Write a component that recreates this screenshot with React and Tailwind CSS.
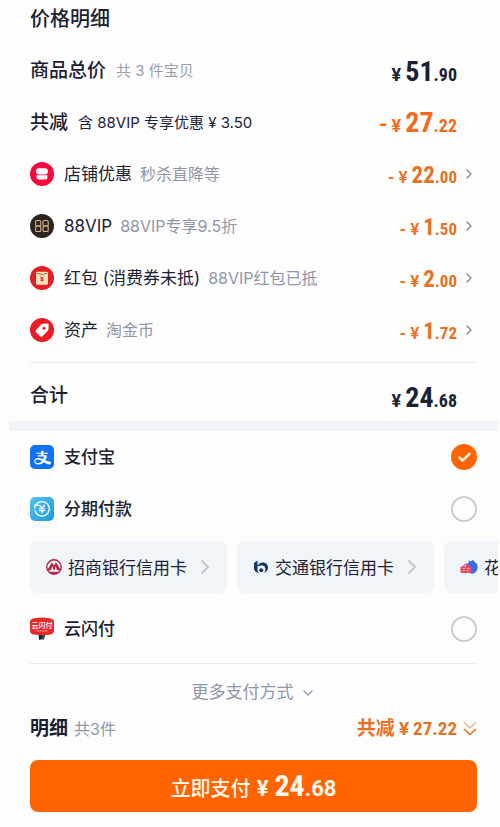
import { useState } from 'react';
import { Check, ChevronDown, ChevronRight } from 'lucide-react';
import { AiOutlineAlipay } from 'react-icons/ai';

const StoreIcon = () => (
  <svg viewBox="0 0 24 24" className="size-6">
    <circle cx="12" cy="12" r="12" fill="#f5093f" />
    <path d="M8.300 6.200h7.400c1.400 0 2.300 1.400 2.300 3.200 0 1.500-.8 2.600-2 2.600H8c-1.200 0-2-1.100-2-2.600 0-1.800.9-3.200 2.300-3.200z" fill="#fff" />
    <path d="M6.600 13.200h10.800v2.500c0 1-.7 1.700-1.700 1.700H8.300c-1 0-1.700-.7-1.700-1.700z" fill="#fff" />
    <path d="M8 12.600h8" stroke="#fbb3c3" strokeWidth="0.8" />
  </svg>
);

const VipIcon = () => (
  <svg viewBox="0 0 24 24" className="size-6">
    <circle cx="12" cy="12" r="12" fill="#2b2420" />
    <g fill="none" stroke="#d9b08a" strokeWidth="1.100" strokeLinejoin="round">
      <rect x="5.600" y="6.500" width="5.200" height="5.500" rx="1.300" />
      <rect x="5.600" y="12" width="5.200" height="5.500" rx="1.300" />
      <rect x="13" y="6.500" width="5.200" height="5.500" rx="1.300" />
      <rect x="13" y="12" width="5.200" height="5.500" rx="1.300" />
    </g>
  </svg>
);

const RedPacketIcon = () => (
  <svg viewBox="0 0 24 24" className="size-6">
    <circle cx="12" cy="12" r="12" fill="#e3201f" />
    <rect x="6" y="5.800" width="12" height="13" rx="1.200" fill="#fde3bd" />
    <path d="M7 7.300Q12 9.500 17 7.300" fill="none" stroke="#b5553c" strokeWidth="0.9" />
    <path d="M10.300 10.500l1.700 2 1.700-2M12 12.500v3.200M10.300 12.900h3.400M10.300 14.300h3.400" fill="none" stroke="#d8352a" strokeWidth="1" />
  </svg>
);

const TagIcon = () => (
  <svg viewBox="0 0 24 24" className="size-6">
    <circle cx="12" cy="12" r="12" fill="#ec1c24" />
    <path d="M12.600 5.800l4.800-.3c.9 0 1.300.4 1.300 1.300l-.3 4.700c0 .5-.2.900-.5 1.200l-5.500 5.500c-.7.7-1.700.7-2.400 0L6.100 14.300c-.7-.7-.7-1.700 0-2.400l5.300-5.600c.3-.3.700-.5 1.200-.5z" fill="#fff" />
    <circle cx="14" cy="10.200" r="1.500" fill="#ec1c24" />
  </svg>
);

const AlipayIcon = () => (
  <span className="flex size-6 items-center justify-center rounded-[5px] bg-[#1073f5] text-white">
    <AiOutlineAlipay size={19} />
  </span>
);

const InstallmentIcon = () => (
  <svg viewBox="0 0 24 24" className="size-6">
    <defs>
      <linearGradient id="installment" x1="0" y1="0" x2="1" y2="1">
        <stop offset="0" stopColor="#55c3ef" />
        <stop offset="1" stopColor="#1d9ade" />
      </linearGradient>
    </defs>
    <rect width="24" height="24" rx="5" fill="url(#installment)" />
    <g fill="none" stroke="#fff" strokeLinecap="round">
      <path d="M6.200 7.600A7.200 7.200 0 1 1 5 13.500" strokeWidth="1.300" />
      <path d="M4.700 11.200l.4-3.800 3.300 1.200" strokeWidth="1.300" strokeLinejoin="round" />
      <path d="M9.600 8.200l2.400 3 2.400-3M12 11.200v4.500M9.500 11.700h5M9.500 13.700h5" strokeWidth="1.300" />
    </g>
  </svg>
);

const UnionPayIcon = () => (
  <svg viewBox="0 0 24 24" className="size-6">
    <path d="M9.500 17h6l-1.500 5.500H9z" fill="#20495c" />
    <path d="M8.500 17h4.500l-2.500 5.500H9z" fill="#1b1f2c" />
    <path d="M4.500 1.200Q12-.4 19.500 1.200 24 1.700 24 5v8.500q0 3.300-3.500 4-8.500 1.400-17 0Q0 16.800 0 13.500V5q0-3.300 4.500-3.800z" fill="#e52a28" />
    <text x="12" y="10.800" textAnchor="middle" fontSize="7" fontWeight="500" fill="#fff">云闪付</text>
    <path d="M6.500 13.800h11" stroke="#f7a29d" strokeWidth="1.300" strokeDasharray="1.200 0.500" />
  </svg>
);

const MerchantsBankIcon = () => (
  <svg viewBox="0 0 16 16" className="size-4">
    <circle cx="8" cy="8" r="7.200" fill="#fff" stroke="#b5213f" strokeWidth="1.400" />
    <path d="M1.200 11.200L6 3.200l2 3.300 2-3.300 4.800 8H11L9.700 7 8.500 11.200h-1L6.300 7 5 11.200z" fill="#b5213f" />
    <path d="M2.500 12.800h11L11 15H5z" fill="#b5213f" />
  </svg>
);

const CommunicationsBankIcon = () => (
  <svg viewBox="0 0 16 16" className="size-4">
    <path d="M1 4L4.500 1.500v9.500c0 1.200.6 2.200 1.500 3C3 13.700 1 11.800 1 9z" fill="#12365f" />
    <path d="M4.500 6.500C6.500 3.800 9.500 3 12 4c2.800 1.200 3.800 4.300 2.500 6.800-.7 1.400-2 2.400-3.500 2.900 1.500-1.700 2-4.200.7-5.900C10 5.900 7 6 4.500 7.800z" fill="#12365f" />
    <circle cx="8.200" cy="11.200" r="2" fill="#12365f" />
  </svg>
);

const HuabeiIcon = () => (
  <svg viewBox="0 0 18 16" className="h-4 w-[18px]">
    <path d="M8.500 1.500l2.500 1L13 .8l1.500 2C17 4 18 6.500 17.500 9.500c-.6 3.300-3.200 5.300-6.500 5.300z" fill="#2f6fe8" />
    <circle cx="11.300" cy="8.500" r="5.500" fill="#2f6fe8" />
    <rect x="0.500" y="7.500" width="11" height="6.500" rx="1" fill="#ee4560" />
    <path d="M3 7.500L6 5l4 2.500" fill="none" stroke="#ee4560" strokeWidth="1.200" />
    <path d="M2.500 9.700h2.500M2.500 11.700h2.500M6.500 9.700h3M6.500 11.700h3" stroke="#ffb9c4" strokeWidth="0.8" />
  </svg>
);

const DoubleChevron = () => (
  <svg viewBox="0 0 14 16" className="h-4 w-[14px]" fill="none" stroke="currentColor" strokeWidth="1.600">
    <path d="M1 1.500l6 5.500 6-5.500" opacity="0.5" />
    <path d="M1 8l6 5.500L13 8" />
  </svg>
);

const DISCOUNTS = [
  { icon: StoreIcon, title: '店铺优惠', note: '秒杀直降等', yuan: '22', cents: '00' },
  { icon: VipIcon, title: '88VIP', note: '88VIP专享9.5折', yuan: '1', cents: '50' },
  { icon: RedPacketIcon, title: '红包 (消费券未抵)', note: '88VIP红包已抵', yuan: '2', cents: '00' },
  { icon: TagIcon, title: '资产', note: '淘金币', yuan: '1', cents: '72' }
];

const CARDS = [
  { icon: MerchantsBankIcon, name: '招商银行信用卡' },
  { icon: CommunicationsBankIcon, name: '交通银行信用卡' },
  { icon: HuabeiIcon, name: '花呗' }
];

const Price = ({ yuan, cents, minus }) => (
  <span className="flex items-baseline pt-1 font-['Roboto_Condensed',Roboto,sans-serif] text-[18px] font-bold">
    {minus && <span className="mr-1 font-[Roboto,sans-serif] text-[22px] leading-8">-</span>}
    <span className="mr-1 font-[Roboto,sans-serif]">¥</span>
    <span className="text-[28px] leading-8">{yuan}</span>
    <span>.{cents}</span>
  </span>
);

const SmallPrice = ({ yuan, cents }) => (
  <span className="flex items-baseline pt-1 font-['Roboto_Condensed',Roboto,sans-serif] text-[17px] font-bold">
    <span className="mr-1 font-[Roboto,sans-serif]">-</span>
    <span className="mr-1 font-[Roboto,sans-serif] font-semibold">¥</span>
    <span className="text-[23px] leading-7">{yuan}</span>
    <span>.{cents}</span>
  </span>
);

const PayOption = ({ icon: Icon, name, value, selected, onSelect }) => (
  <label className="flex h-[52px] cursor-pointer items-center px-[21px]">
    <Icon />
    <span className="ml-[10px] flex-1 pt-0.5 text-[17px] font-medium">{name}</span>
    <span className="relative flex size-[26px] items-center justify-center">
      <input
        type="radio"
        name="payment"
        value={value}
        checked={selected}
        onChange={() => onSelect(value)}
        className="size-[26px] appearance-none rounded-full border-2 border-[#c9ccd2] checked:border-[#ff6400] checked:bg-[#ff6400]"
      />
      {selected && <Check size={15} strokeWidth={4} className="absolute text-[#fff3e6]" />}
    </span>
  </label>
);

const App = () => {
  const [payment, setPayment] = useState('alipay');

  return (
    <main className="bg-[#fdfdfd] pr-[2px] pb-4 pl-[9px] font-[Inter,'Noto_Sans_CJK_SC',sans-serif] text-[#1b2133]">
      {/* Price details */}
      <section className="px-[21px]">
        <h1 className="mb-2 flex h-9 items-center pt-0.5 text-[20px] font-medium">价格明细</h1>

        <div className="flex h-[52px] items-center justify-between pr-5">
          <div className="flex items-center gap-[10px] pt-0.5">
            <h2 className="text-[19px] font-medium">商品总价</h2>
            <span className="text-[15px] text-[#979dac]">共 3 件宝贝</span>
          </div>
          <Price yuan="51" cents="90" />
        </div>

        <div className="flex h-[52px] items-center justify-between pr-5">
          <div className="flex items-center gap-[10px] pt-0.5">
            <h2 className="text-[19px] font-medium">共减</h2>
            <span className="text-[15px]">含 88VIP 专享优惠 ¥ 3.50</span>
          </div>
          <span className="text-[#f26a1b]">
            <Price yuan="27" cents="22" minus />
          </span>
        </div>

        {DISCOUNTS.map(({ icon: Icon, title, note, yuan, cents }) => (
          <button key={title} type="button" className="flex h-[52px] w-full items-center text-left">
            <Icon />
            <span className="ml-[10px] flex flex-1 items-baseline gap-2 pt-0.5">
              <span className="text-[17px]">{title}</span>
              <span className="text-base text-[#8f96a8]">{note}</span>
            </span>
            <span className="text-[#e87022]">
              <SmallPrice yuan={yuan} cents={cents} />
            </span>
            <ChevronRight size={16} strokeWidth={2} className="ml-1 text-[#83868e]" />
          </button>
        ))}

        <div className="mt-1.5 flex h-[59px] items-center justify-between border-t border-[#e8eaee] pt-2 pr-5">
          <h2 className="text-[19px] font-medium">合计</h2>
          <Price yuan="24" cents="68" />
        </div>
      </section>

      <div className="h-[10px] bg-[#f0f3f8]"></div>

      {/* Payment methods */}
      <section>
        <PayOption icon={AlipayIcon} name="支付宝" value="alipay" selected={payment === 'alipay'} onSelect={setPayment} />
        <PayOption icon={InstallmentIcon} name="分期付款" value="installment" selected={payment === 'installment'} onSelect={setPayment} />

        <div className="mt-1.5 mb-[10px] flex gap-[10px] overflow-hidden pl-[21px]">
          {CARDS.map(({ icon: Icon, name }) => (
            <button key={name} type="button" className="flex h-[52px] shrink-0 items-center rounded-lg bg-[#f1f4f8] pr-[10px] pl-4 text-[17px]">
              <Icon />
              <span className="ml-1.5 pt-1">{name}</span>
              <ChevronRight size={24} strokeWidth={2} className="ml-1.5 text-[#c3c7cf]" />
            </button>
          ))}
        </div>

        <PayOption icon={UnionPayIcon} name="云闪付" value="unionpay" selected={payment === 'unionpay'} onSelect={setPayment} />
      </section>

      {/* Footer */}
      <footer className="mx-[21px] mt-2 border-t border-[#e8eaee] pt-2">
        <button type="button" className="flex h-10 w-full items-center justify-center gap-1.5 pt-0.5 text-[17px] text-[#8f96a8]">
          更多支付方式
          <ChevronDown size={16} strokeWidth={2} />
        </button>

        <div className="flex h-8 items-center justify-between">
          <div className="flex items-center gap-1.5 pt-0.5">
            <h2 className="text-[19px] font-bold">明细</h2>
            <span className="text-base text-[#8f96a8]">共3件</span>
          </div>
          <button type="button" className="flex items-center gap-1.5 pt-0.5 text-[19px] font-bold text-[#e87022]">
            <span className="flex items-baseline gap-1">
              共减
              <span className="font-[Roboto,sans-serif]">¥</span>
              <span className="font-['Roboto_Condensed',Roboto,sans-serif]">27.22</span>
            </span>
            <DoubleChevron />
          </button>
        </div>

        <button type="button" className="mt-4 flex h-[52px] w-full items-center justify-center rounded-lg bg-[#ff6400] text-[#fff8ee]">
          <span className="flex items-baseline pt-0.5 text-[20px] font-medium">
            立即支付
            <span className="mx-1.5 font-[Roboto,sans-serif] text-[22px] font-bold">¥</span>
            <span className="font-['Roboto_Condensed',Roboto,sans-serif] text-[30px] leading-8 font-bold">24</span>
            <span className="font-[Roboto,sans-serif] text-[22px] font-bold">.68</span>
          </span>
        </button>
      </footer>
    </main>
  );
};

export default App;
